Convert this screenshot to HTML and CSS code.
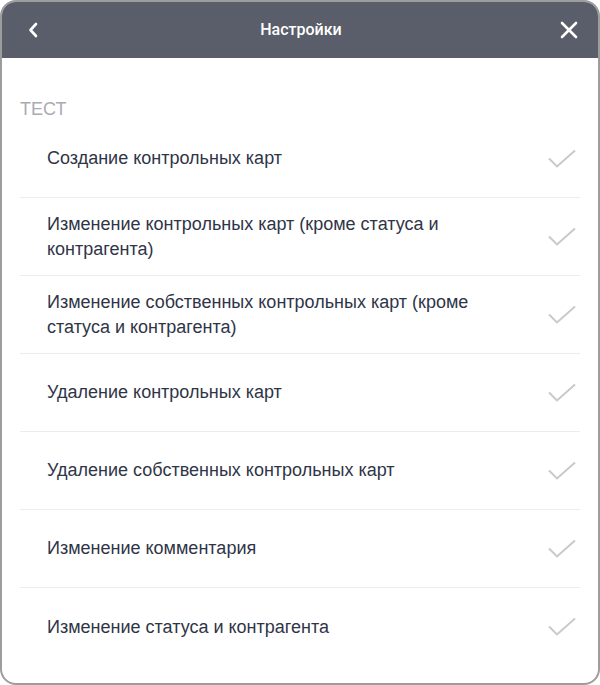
FILE: index.html
```html
<!DOCTYPE html>
<html lang="ru">
<head>
<meta charset="utf-8">
<link rel="stylesheet" href="styles.css">
</head>
<body>
<div class="frame">
  <header class="header">
    <button class="icon-btn back" aria-label="Назад">
      <svg width="12" height="16" viewBox="0 0 12 16"><path d="M9 2 L3.5 8 L9 14" fill="none" stroke="#fff" stroke-width="2.6" stroke-linecap="round" stroke-linejoin="round"/></svg>
    </button>
    <h1 class="title">Настройки</h1>
    <button class="icon-btn close" aria-label="Закрыть">
      <svg width="18" height="18" viewBox="0 0 18 18"><path d="M2 2 L16 16 M16 2 L2 16" fill="none" stroke="#fff" stroke-width="2.6" stroke-linecap="round"/></svg>
    </button>
  </header>
  <main class="content">
    <div class="section-label">ТЕСТ</div>
    <ul class="list">
      <li class="row"><span class="row-text">Создание контрольных карт</span><svg class="check" width="28" height="20" viewBox="0 0 28 20"><path d="M1 9.5 L9 17.5 L27 1.5" fill="none" stroke="#c9c9c9" stroke-width="2"/></svg></li>
      <li class="row"><span class="row-text">Изменение контрольных карт (кроме статуса и контрагента)</span><svg class="check" width="28" height="20" viewBox="0 0 28 20"><path d="M1 9.5 L9 17.5 L27 1.5" fill="none" stroke="#c9c9c9" stroke-width="2"/></svg></li>
      <li class="row"><span class="row-text">Изменение собственных контрольных карт (кроме статуса и контрагента)</span><svg class="check" width="28" height="20" viewBox="0 0 28 20"><path d="M1 9.5 L9 17.5 L27 1.5" fill="none" stroke="#c9c9c9" stroke-width="2"/></svg></li>
      <li class="row"><span class="row-text">Удаление контрольных карт</span><svg class="check" width="28" height="20" viewBox="0 0 28 20"><path d="M1 9.5 L9 17.5 L27 1.5" fill="none" stroke="#c9c9c9" stroke-width="2"/></svg></li>
      <li class="row"><span class="row-text">Удаление собственных контрольных карт</span><svg class="check" width="28" height="20" viewBox="0 0 28 20"><path d="M1 9.5 L9 17.5 L27 1.5" fill="none" stroke="#c9c9c9" stroke-width="2"/></svg></li>
      <li class="row"><span class="row-text">Изменение комментария</span><svg class="check" width="28" height="20" viewBox="0 0 28 20"><path d="M1 9.5 L9 17.5 L27 1.5" fill="none" stroke="#c9c9c9" stroke-width="2"/></svg></li>
      <li class="row"><span class="row-text">Изменение статуса и контрагента</span><svg class="check" width="28" height="20" viewBox="0 0 28 20"><path d="M1 9.5 L9 17.5 L27 1.5" fill="none" stroke="#c9c9c9" stroke-width="2"/></svg></li>
    </ul>
  </main>
</div>
</body>
</html>
```
FILE: styles.css
```css
* { box-sizing: border-box; }
html, body { margin: 0; padding: 0; background: #fff; }
body { font-family: "Liberation Sans", Arial, sans-serif; }

.frame {
  width: 600px;
  height: 685px;
  border: 2px solid #9d9d9d;
  border-radius: 16px;
  overflow: hidden;
  background: #fff;
  display: flex;
  flex-direction: column;
}

.header {
  height: 56px;
  background: #5a5e6a;
  display: flex;
  align-items: center;
  justify-content: space-between;
  padding: 0 18px 0 20px;
}

.icon-btn {
  background: none;
  border: 0;
  padding: 0;
  width: 22px;
  height: 22px;
  display: flex;
  align-items: center;
  justify-content: center;
  cursor: pointer;
}

.title {
  margin: 0;
  color: #fff;
  font-family: Roboto, "Liberation Sans", Arial, sans-serif;
  font-size: 16px;
  font-weight: 500;
  line-height: 20px;
}

.content {
  padding: 40px 18px 0 18px;
}

.section-label {
  color: #a9acb3;
  font-size: 18px;
  line-height: 22px;
}

.list {
  list-style: none;
  margin: 0;
  padding: 0;
}

.row {
  min-height: 78px;
  display: flex;
  align-items: center;
  padding: 0 4px 0 27px;
  border-bottom: 1px solid #ececec;
  color: #2f3547;
  font-size: 18px;
  line-height: 25px;
}

.row:last-child { border-bottom: 0; }

.row-text {
  flex: 1;
  margin-right: 40px;
}

.check { flex: none; }
```
